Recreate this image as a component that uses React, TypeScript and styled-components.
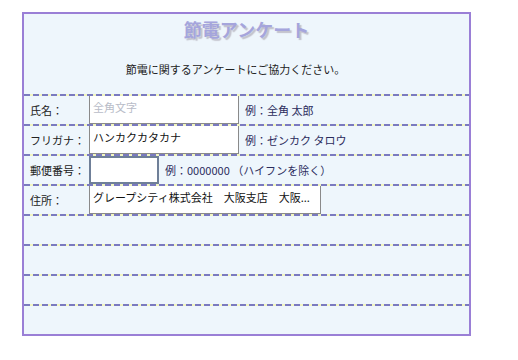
import React from 'react';
import styled, { createGlobalStyle } from 'styled-components';

const GlobalStyle = createGlobalStyle`
	body {
		margin: 0;
		background: #fff;
		font-family: "Noto Sans CJK JP", "Noto Sans", sans-serif;
	}
`;

const Page = styled.div`
	padding: 12px 0 0 22px;
`;

const Panel = styled.div`
	width: 445px;
	border: 2px solid #9a7fd6;
	background-color: #eef6fc;
`;

const Header = styled.div`
	height: 80px;
	display: flex;
	flex-direction: column;
	align-items: center;
`;

const Title = styled.h1`
	margin: 3px 0 0;
	font-size: 18px;
	font-weight: bold;
	line-height: 24px;
	color: #a5a5dc;
	text-shadow: 2px 2px 1px #c2c2cc;
`;

const Lead = styled.p`
	margin: 20px 22px 0 0;
	font-size: 11px;
	line-height: 16px;
	color: #222;
`;

const Row = styled.div`
	height: 28px;
	padding-top: 2px;
	display: grid;
	grid-template-columns: 65px auto 1fr;
	align-items: stretch;
	background-image: repeating-linear-gradient(to right, #7a7abf 0 6px, #f2f6c0 6px 9px);
	background-size: 100% 2px;
	background-repeat: no-repeat;
`;

const Label = styled.span`
	padding-left: 6px;
	font-size: 11px;
	line-height: 28px;
	color: #222;
`;

const Field = styled.input<{ $w: number; $focus?: boolean }>`
	box-sizing: border-box;
	width: ${(p) => p.$w}px;
	height: 28px;
	margin: 0;
	padding: 0 0 5px 3px;
	border-style: solid;
	border-width: ${(p) => (p.$focus ? '2px' : '0 1px 1px 1px')};
	border-color: ${(p) => (p.$focus ? '#6f7f98' : '#8a8a8a')};
	background: #fff;
	font-family: "Noto Sans CJK JP", "Noto Sans", sans-serif;
	font-size: 11px;
	color: #111;
	outline: none;
	&::placeholder {
		color: #b8bcc8;
	}
`;

const Hint = styled.span`
	padding-left: 6px;
	font-size: 11px;
	line-height: 28px;
	color: #2c2c5c;
	white-space: nowrap;
`;

type Item = { label: string; width: number; value?: string; placeholder?: string; hint?: string; focus?: boolean };

const ITEMS: Item[] = [
	{ label: '氏名：', width: 150, placeholder: '全角文字', hint: '例：全角 太郎' },
	{ label: 'フリガナ：', width: 150, value: 'ハンカクカタカナ', hint: '例：ゼンカク タロウ' },
	{ label: '郵便番号：', width: 70, value: '', hint: '例：0000000 （ハイフンを除く）', focus: true },
	{ label: '住所：', width: 232, value: 'グレープシティ株式会社　大阪支店　大阪...' },
];

const App = () => {
	return (
		<Page>
			<GlobalStyle />
			<Panel>
				<Header>
					<Title>節電アンケート</Title>
					<Lead>節電に関するアンケートにご協力ください。</Lead>
				</Header>
				{ITEMS.map((item) => (
					<Row key={item.label}>
						<Label>{item.label}</Label>
						<Field
							$w={item.width}
							$focus={item.focus}
							readOnly
							value={item.value ?? ''}
							placeholder={item.placeholder}
						/>
						{item.hint ? <Hint>{item.hint}</Hint> : <span />}
					</Row>
				))}
				<Row />
				<Row />
				<Row />
				<Row />
			</Panel>
		</Page>
	);
};

export default App;
